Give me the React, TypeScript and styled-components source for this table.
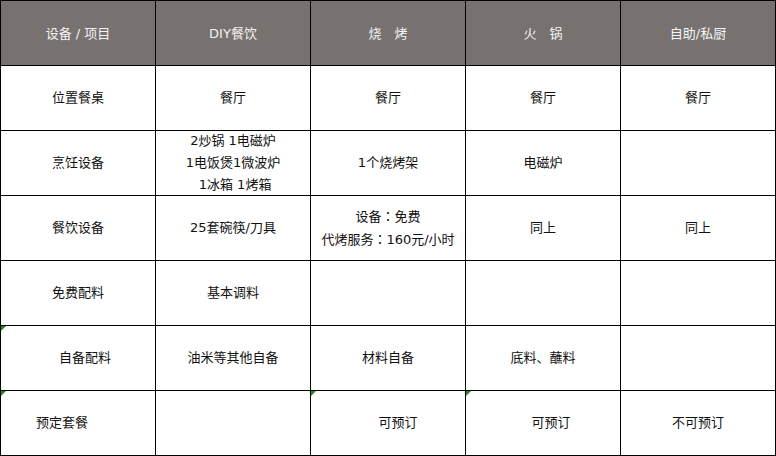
import styled, { createGlobalStyle } from "styled-components";

const GlobalStyle = createGlobalStyle`
    html, body {
        margin: 0;
        padding: 0;
        background: #FFFFFF;
    }
    body {
        font-family: "DejaVu Sans", "Noto Sans CJK SC", sans-serif;
    }
`

interface CellData {
    text?: string[];
    shift?: number;
    mark?: boolean;
}

const header = ['设备 / 项目', 'DIY餐饮', '烧　烤', '火　锅', '自助/私厨']

const rows: CellData[][] = [
    [{text: ['位置餐桌']}, {text: ['餐厅']}, {text: ['餐厅']}, {text: ['餐厅']}, {text: ['餐厅']}],
    [
        {text: ['烹饪设备']},
        {text: ['2炒锅 1电磁炉', '1电饭煲1微波炉', ' 1冰箱 1烤箱']},
        {text: ['1个烧烤架']},
        {text: ['电磁炉']},
        {},
    ],
    [
        {text: ['餐饮设备']},
        {text: ['25套碗筷/刀具']},
        {text: ['设备：免费', '代烤服务：160元/小时']},
        {text: ['同上']},
        {text: ['同上']},
    ],
    [{text: ['免费配料']}, {text: ['基本调料']}, {}, {}, {}],
    [
        {text: ['自备配料'], shift: 7, mark: true},
        {text: ['油米等其他自备']},
        {text: ['材料自备']},
        {text: ['底料、蘸料']},
        {},
    ],
    [
        {text: ['预定套餐'], shift: -16, mark: true},
        {},
        {text: ['可预订'], shift: 10, mark: true},
        {text: ['可预订'], shift: 8, mark: true},
        {text: ['不可预订']},
    ],
]

// full-width colon drawn centred, as in the original sheet
function renderLine(line: string){
    const parts = line.split('：')
    return parts.map((part, i) => (
        <span key={i}>
            {i > 0 && <Colon>：</Colon>}
            {part}
        </span>
    ))
}

function App(){
    return(
        <>
            <GlobalStyle/>
            <Table>
                {header.map((h, i) => (
                    <HeadCell key={'h' + i}>{h}</HeadCell>
                ))}
                {rows.map((row, r) => row.map((cell, c) => (
                    <Cell key={r + '-' + c} $mark={cell.mark}>
                        <CellText $shift={cell.shift || 0}>
                            {(cell.text || []).map((line, l) => (
                                <Line key={l}>{renderLine(line)}</Line>
                            ))}
                        </CellText>
                    </Cell>
                )))}
            </Table>
        </>
    )
}


const Table = styled.div`
    display: grid;
    grid-template-columns: repeat(5, 154px);
    grid-auto-rows: 64px;
    gap: 1px;
    padding: 1px;
    width: 776px;
    box-sizing: border-box;
    background: #000000;
`

const HeadCell = styled.div`
    display: flex;
    align-items: center;
    justify-content: center;
    background: #77716F;
    color: #F4F4F4;
    font-size: 13px;
    white-space: pre;
    padding-bottom: 1px;
`

const Cell = styled.div<{$mark?: boolean}>`
    position: relative;
    display: flex;
    align-items: center;
    justify-content: center;
    background: #FFFFFF;
    color: #111111;
    font-size: 13px;
    &::before {
        content: '';
        display: ${p => p.$mark ? 'block' : 'none'};
        position: absolute;
        top: 0;
        left: 0;
        border-top: 5px solid #1E8A1E;
        border-right: 5px solid transparent;
    }
`

const CellText = styled.div<{$shift: number}>`
    display: flex;
    flex-direction: column;
    align-items: center;
    transform: translateX(${p => p.$shift}px);
`

const Line = styled.span`
    line-height: 22px;
    white-space: pre;
`

const Colon = styled.span`
    font-family: "Noto Sans CJK TC", "Noto Sans CJK SC", sans-serif;
`


export default App;
